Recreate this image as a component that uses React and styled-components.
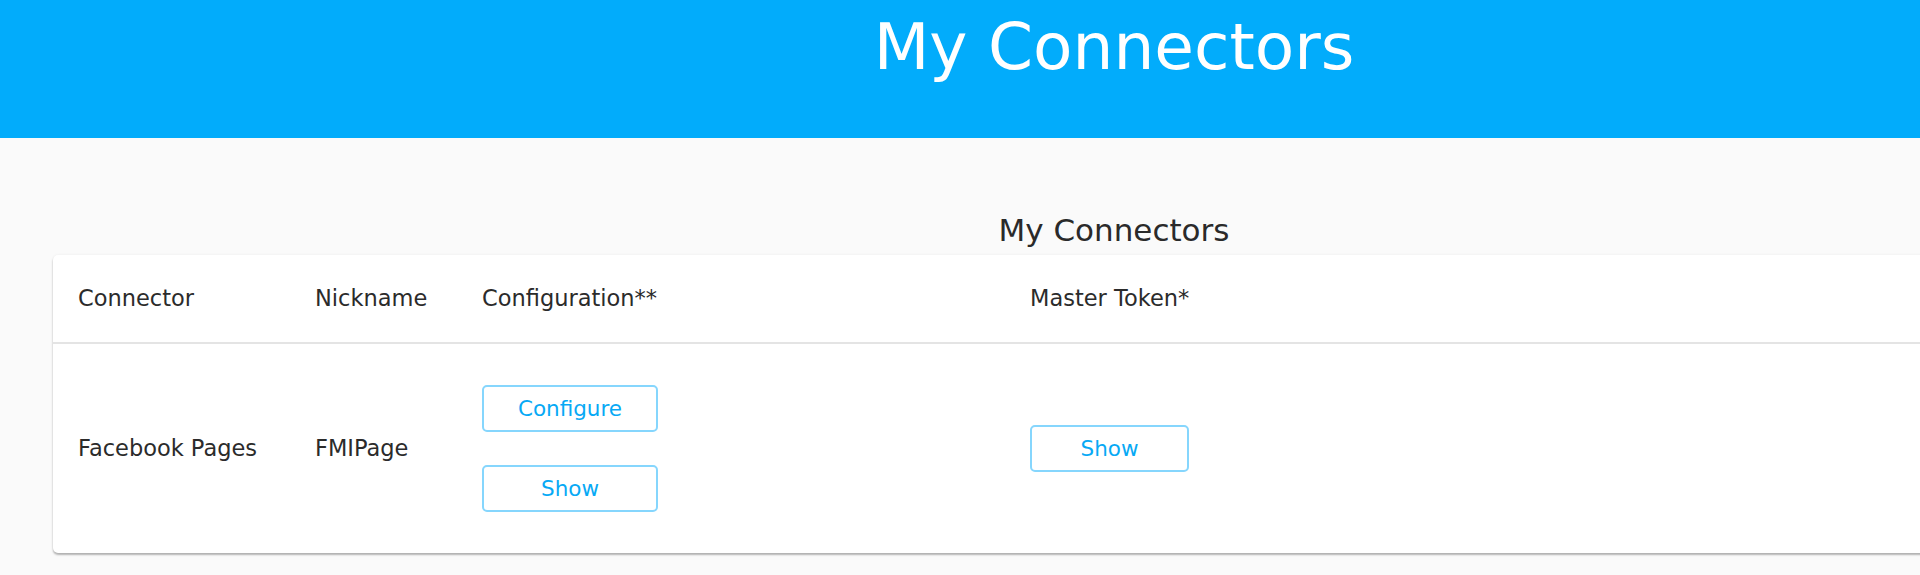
import React from "react";
import styled, { createGlobalStyle } from "styled-components";

const GlobalStyle = createGlobalStyle`
  html, body {
    margin: 0;
    padding: 0;
    background: #fafafa;
    overflow: hidden;
  }
  body {
    font-family: "DejaVu Sans", "Noto Sans", sans-serif;
    color: #333;
  }
  * { box-sizing: border-box; }
`;

const Viewport = styled.div`
  width: 100vw;
  overflow: hidden;
`;

const Page = styled.div`
  width: 2228px;
  min-height: 575px;
  background: #fafafa;
`;

const Banner = styled.header`
  height: 138px;
  background: #02acfb;
  padding-top: 15px;
  text-align: center;
`;

const BannerTitle = styled.h1`
  margin: 0;
  font-size: 64.5px;
  line-height: 1;
  font-weight: 400;
  color: #ffffff;
`;

const Main = styled.main`
  padding: 77px 53px 0;
`;

const SectionTitle = styled.h2`
  margin: 0 0 9px;
  font-size: 31px;
  line-height: 1;
  font-weight: 400;
  text-align: center;
  color: #2a2a2a;
`;

const Card = styled.section`
  background: #ffffff;
  border-radius: 5px;
  box-shadow: 0 2px 2px rgba(0, 0, 0, 0.28), 0 0 3px rgba(0, 0, 0, 0.06);
`;

const Row = styled.div`
  display: grid;
  grid-template-columns: 237px 167px 548px 1fr;
  align-items: center;
  height: ${(p) => p.$height}px;
  border-bottom: ${(p) => (p.$divider ? "2px solid #e4e4e4" : "none")};
`;

const Cell = styled.div`
  padding: 0 25px;
  font-size: 22.5px;
  line-height: 1;
  color: #2b2b2b;
  white-space: nowrap;
`;

const ButtonStack = styled.div`
  display: flex;
  flex-direction: column;
  gap: 33px;
`;

const OutlineButton = styled.button`
  width: ${(p) => p.$width}px;
  height: 47px;
  padding: 0;
  background: #ffffff;
  border: 2px solid #86d6fd;
  border-radius: 5px;
  font-family: "DejaVu Sans", "Noto Sans", sans-serif;
  font-size: 21.5px;
  line-height: 1;
  color: #07a9f5;
  cursor: pointer;
`;

export default function App() {
  return (
    <Viewport>
      <GlobalStyle />
      <Page>
        <Banner>
          <BannerTitle>My Connectors</BannerTitle>
        </Banner>
        <Main>
          <SectionTitle>My Connectors</SectionTitle>
          <Card>
            <Row $height={89} $divider>
              <Cell>Connector</Cell>
              <Cell>Nickname</Cell>
              <Cell>Configuration**</Cell>
              <Cell>Master Token*</Cell>
            </Row>
            <Row $height={209}>
              <Cell>Facebook Pages</Cell>
              <Cell>FMIPage</Cell>
              <Cell>
                <ButtonStack>
                  <OutlineButton $width={176}>Configure</OutlineButton>
                  <OutlineButton $width={176}>Show</OutlineButton>
                </ButtonStack>
              </Cell>
              <Cell>
                <OutlineButton $width={159}>Show</OutlineButton>
              </Cell>
            </Row>
          </Card>
        </Main>
      </Page>
    </Viewport>
  );
}
